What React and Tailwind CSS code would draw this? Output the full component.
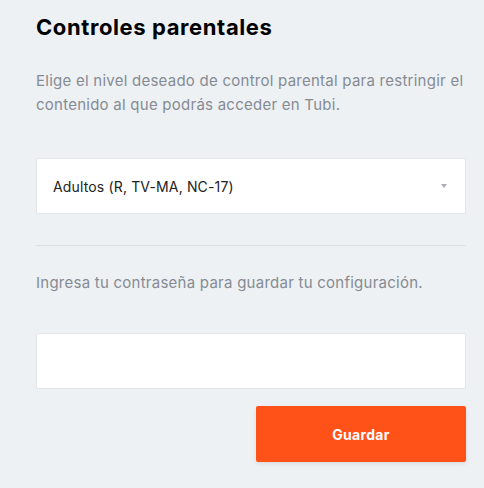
import React from 'react';

const App = () => {
  return (
    <div
      className="min-h-[488px] w-full bg-[#eef1f4] pl-[36px] pr-[18px] pt-[12px] pb-[26px]"
      style={{ fontFamily: 'Inter, "Liberation Sans", sans-serif' }}
    >
      {/* Heading */}
      <h1 className="text-[22px] leading-[30px] font-bold tracking-[0.6px] text-black">Controles parentales</h1>

      <p className="mt-[27px] text-[15px] leading-[24px] tracking-[0.25px] text-[#858b93]">
        Elige el nivel deseado de control parental para restringir el contenido al que podrás acceder en Tubi.
      </p>

      {/* Rating select */}
      <div className="mt-[41px] flex h-[56px] items-center justify-between rounded-[2px] border border-[#e2e5e9] bg-white pl-[16px] pr-[18px]">
        <span className="text-[14px] tracking-[0.15px] text-[#222]">Adultos (R, TV-MA, NC-17)</span>
        <svg width="6" height="4" viewBox="0 0 6 4">
          <path d="M0 0h6L3 4z" fill="#a8adb3" />
        </svg>
      </div>

      <div className="mt-[31px] border-t border-[#dadfe4]" />

      <p className="mt-[25px] text-[15px] leading-[24px] tracking-[0.25px] text-[#858b93]">
        Ingresa tu contraseña para guardar tu configuración.
      </p>

      {/* Password */}
      <input
        type="password"
        className="mt-[38px] block h-[56px] w-full rounded-[2px] border border-[#e2e5e9] bg-white px-[16px] outline-none"
      />

      <div className="mt-[17px] flex justify-end">
        <button className="h-[56px] w-[210px] rounded-[2px] bg-[#ff5219] text-[14px] font-bold tracking-[0.3px] text-white shadow-[0_2px_4px_rgba(0,0,0,0.08)]">
          Guardar
        </button>
      </div>
    </div>
  );
};

export default App;
